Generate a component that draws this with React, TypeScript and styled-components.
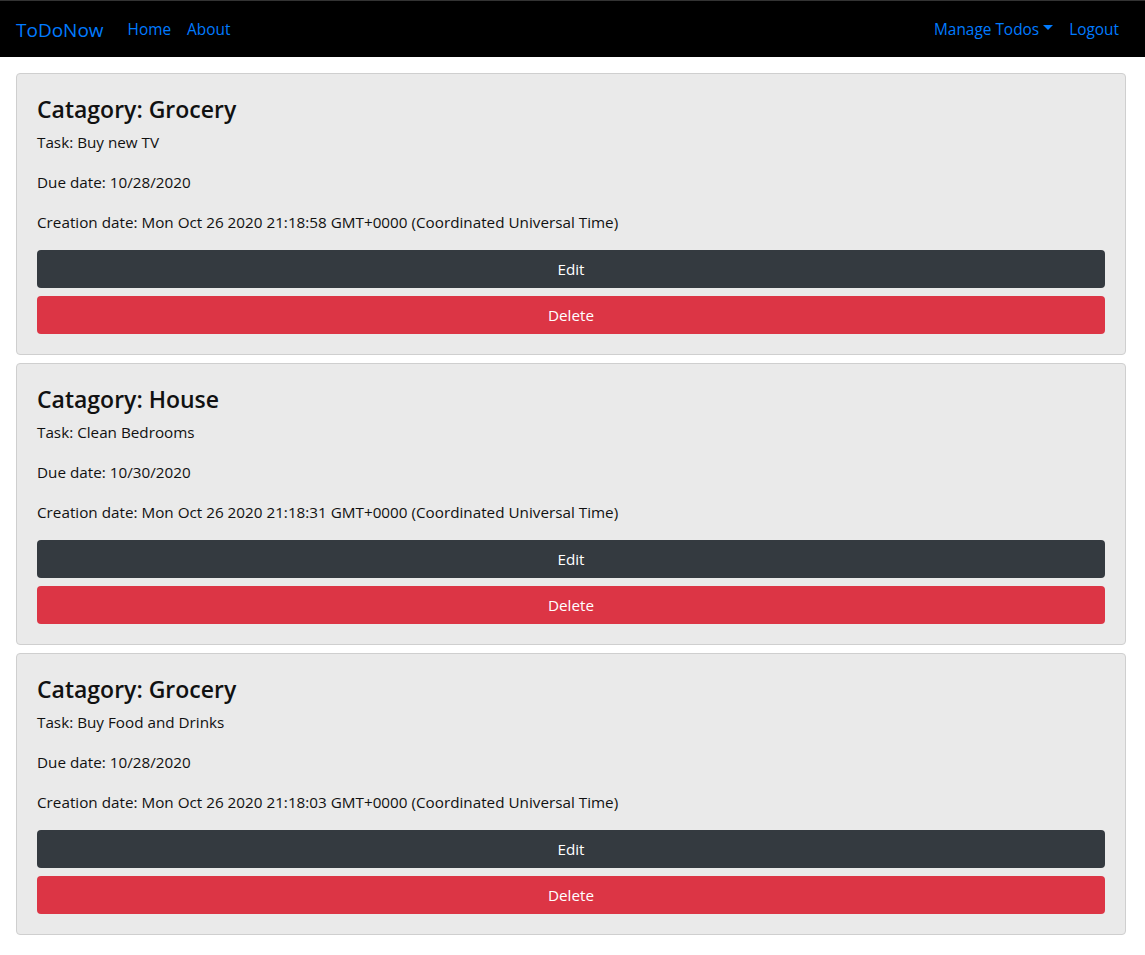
import React from "react";
import styled, { createGlobalStyle } from "styled-components";

const Global = createGlobalStyle`
  html, body { margin: 0; padding: 0; background: #fff; }
  body {
    font-family: "Open Sans", "Noto Sans", "Liberation Sans", sans-serif;
    font-size: 15.25px;
    line-height: 1.5;
    color: #212529;
  }
  * { box-sizing: border-box; }
`;

const Nav = styled.nav`
  display: flex;
  align-items: center;
  justify-content: space-between;
  height: 57px;
  padding: 2px 18px 0 16px;
  background: #000;
  border-top: 1px solid #333;
`;

const Left = styled.div`
  display: flex;
  align-items: center;
`;

const Brand = styled.a`
  color: #007bff;
  font-size: 19px;
  margin-right: 16px;
  text-decoration: none;
  line-height: 30px;
`;

const Links = styled.div`
  display: flex;
  align-items: center;
`;

const NavLink = styled.a`
  color: #007bff;
  font-size: 15.4px;
  padding: 8px 8px;
  text-decoration: none;
  display: inline-flex;
  align-items: center;
`;

const Caret = styled.span`
  display: inline-block;
  margin-left: 4px;
  width: 0;
  height: 0;
  border-left: 5px solid transparent;
  border-right: 5px solid transparent;
  border-top: 5px solid #007bff;
  transform: translateY(-2px);
`;

const Main = styled.main`
  display: flex;
  flex-direction: column;
  gap: 8px;
  padding: 16px 19px 20px 16px;
`;

const Card = styled.section`
  background: #eaeaea;
  border: 1px solid #cfcfcf;
  border-radius: 4px;
  padding: 20px;
`;

const Title = styled.h3`
  margin: 0 0 5px;
  font-size: 23px;
  font-weight: 600;
  line-height: 31px;
  color: #111;
`;

const Line = styled.p`
  margin: 0 0 16px;
  line-height: 24px;
  color: #111;
`;

const Button = styled.button<{ $variant: "dark" | "danger" }>`
  display: block;
  width: 100%;
  height: 38px;
  border: none;
  border-radius: 4px;
  font-family: inherit;
  font-size: 15.25px;
  color: #fff;
  background: ${(p) => (p.$variant === "dark" ? "#343a40" : "#dc3545")};
  & + & { margin-top: 8px; }
`;

const todos = [
  { cat: "Grocery", task: "Buy new TV", due: "10/28/2020", created: "Mon Oct 26 2020 21:18:58 GMT+0000 (Coordinated Universal Time)" },
  { cat: "House", task: "Clean Bedrooms", due: "10/30/2020", created: "Mon Oct 26 2020 21:18:31 GMT+0000 (Coordinated Universal Time)" },
  { cat: "Grocery", task: "Buy Food and Drinks", due: "10/28/2020", created: "Mon Oct 26 2020 21:18:03 GMT+0000 (Coordinated Universal Time)" },
];

export default function App() {
  return (
    <>
      <Global />
      <Nav>
        <Left>
          <Brand href="#">ToDoNow</Brand>
          <Links>
            <NavLink href="#">Home</NavLink>
            <NavLink href="#">About</NavLink>
          </Links>
        </Left>
        <Links>
          <NavLink href="#">Manage Todos<Caret /></NavLink>
          <NavLink href="#">Logout</NavLink>
        </Links>
      </Nav>
      <Main>
        {todos.map((t, i) => (
          <Card key={i}>
            <Title>Catagory: {t.cat}</Title>
            <Line>Task: {t.task}</Line>
            <Line>Due date: {t.due}</Line>
            <Line>Creation date: {t.created}</Line>
            <Button $variant="dark">Edit</Button>
            <Button $variant="danger">Delete</Button>
          </Card>
        ))}
      </Main>
    </>
  );
}
